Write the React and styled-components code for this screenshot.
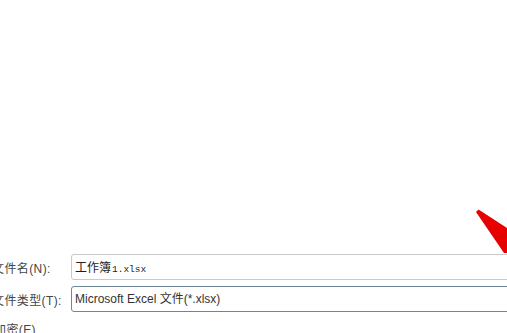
import React from "react";
import styled, { createGlobalStyle } from "styled-components";

const GlobalStyle = createGlobalStyle`
  html, body {
    margin: 0;
    padding: 0;
    background: #ffffff;
    overflow: hidden;
  }
  body {
    font-family: "Liberation Sans", "Noto Sans CJK SC", sans-serif;
  }
`;

const Page = styled.div`
  position: relative;
  width: 507px;
  height: 333px;
  overflow: hidden;
  background: #ffffff;
  padding-top: 254px;
  box-sizing: border-box;
`;

const Form = styled.div`
  display: grid;
  grid-template-columns: 79px 1fr;
  grid-auto-rows: 26px;
  row-gap: 6px;
  margin-left: -8px;
  margin-right: -12px;
`;

const Label = styled.label`
  display: flex;
  align-items: center;
  font-size: 12px;
  letter-spacing: 0.4px;
  color: #454545;
  white-space: nowrap;
`;

const Field = styled.div`
  display: block;
  line-height: 24px;
  height: 26px;
  padding-left: 3px;
  border: 1px solid ${(p) => (p.$focus ? "#6e8697" : "#c9c9c9")};
  border-radius: 3px;
  box-sizing: border-box;
  font-size: 12px;
  color: #1e1e1e;
  white-space: nowrap;
  overflow: hidden;
`;

const Cjk = styled.span`
  font-family: "Noto Sans CJK SC", sans-serif;
  font-size: 12px;
  line-height: 24px;
`;

const Mono = styled.span`
  font-family: "Liberation Mono", monospace;
  font-size: 9.5px;
  line-height: 24px;
  padding-left: 1px;
`;

const Option = styled.span`
  font-family: "Liberation Sans", "Noto Sans CJK SC", sans-serif;
  font-size: 12px;
  color: #333333;
`;

const Encrypt = styled.div`
  margin: 8px 0 0 -6px;
  font-size: 12px;
  letter-spacing: 0.4px;
  color: #454545;
  white-space: nowrap;
`;

const Arrow = styled.svg`
  position: absolute;
  left: 0;
  top: 0;
  pointer-events: none;
`;

export default function App() {
  return (
    <>
      <GlobalStyle />
      <Page>
        <Form>
          <Label>文件名(N):</Label>
          <Field>
            <Cjk>工作簿</Cjk>
            <Mono>1.xlsx</Mono>
          </Field>
          <Label>文件类型(T):</Label>
          <Field $focus>
            <Option>Microsoft Excel 文件(*.xlsx)</Option>
          </Field>
        </Form>
        <Encrypt>加密(E)</Encrypt>
        <Arrow width="507" height="333" viewBox="0 0 507 333">
          <polygon
            points="476,212 478.5,209.5 507,228 507,253 504,253"
            fill="#e60000"
          />
        </Arrow>
      </Page>
    </>
  );
}
